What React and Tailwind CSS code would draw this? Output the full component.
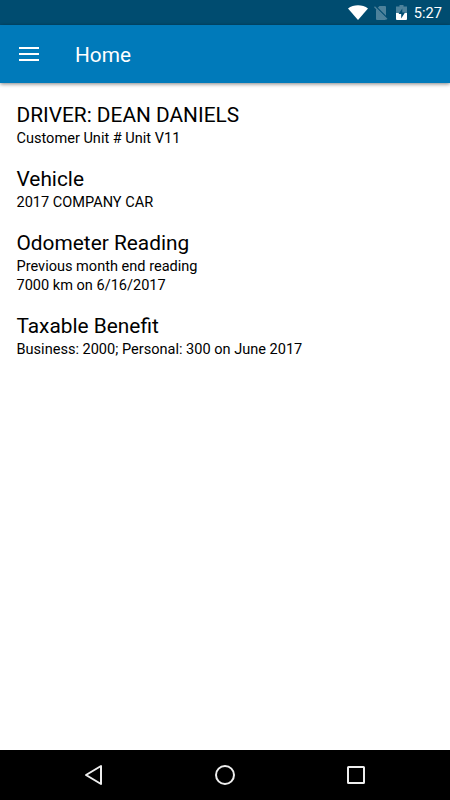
const sections = [
  { title: "DRIVER: DEAN DANIELS", lines: ["Customer Unit # Unit V11"] },
  { title: "Vehicle", lines: ["2017 COMPANY CAR"] },
  { title: "Odometer Reading", lines: ["Previous month end reading", "7000 km on 6/16/2017"] },
  { title: "Taxable Benefit", lines: ["Business: 2000; Personal: 300 on June 2017"] },
];

const StatusBar = () => (
  <div className="flex h-[25px] items-center justify-end bg-[#004c70] pr-2 text-white">
    <svg width="20" height="15" viewBox="0 0 20 15" className="mr-[6px]">
      <path d="M0 3.500C5.500-.9 14.500-.9 20 3.500L10 15Z" fill="currentColor" />
    </svg>
    {/* no SIM */}
    <svg width="14" height="15" viewBox="0 0 14 15" className="mr-2 text-[#4d829b]">
      <path d="M5.500 1H11q1 0 1 1v12q0 1-1 1H3q-1 0-1-1V4.500Z" fill="currentColor" />
      <path d="M1.500 1.200L14 13.700" stroke="#004c70" strokeWidth="1.500" />
      <path d="M.5 1.800L13 14.300" stroke="currentColor" strokeWidth="1.300" />
    </svg>
    {/* half charged battery */}
    <svg width="11" height="15" viewBox="0 0 11 15" className="mr-[7px]">
      <path d="M3.500 0h4v1.500H11V8H0V1.500h3.500Z" fill="#4d829b" />
      <path d="M0 8h11v6q0 1-1 1H1q-1 0-1-1Z" fill="currentColor" />
      <path d="M6.300 3.500L2.500 9h2.700v4.500L9 7.500H6.300Z" fill="#004c70" />
    </svg>
    <span className="pt-0.5 text-[14.6px] leading-none">5:27</span>
  </div>
);

const AppBar = () => (
  <header className="flex h-[58px] items-center bg-[#007aba] pl-[19px] text-white shadow-[0_1px_4px_rgba(0,0,0,0.5)]">
    <button type="button" aria-label="Menu">
      <svg width="20" height="14" viewBox="0 0 20 14" fill="currentColor">
        <path d="M0 0h20v2H0ZM0 6h20v2H0ZM0 12h20v2H0Z" />
      </svg>
    </button>
    <h1 className="ml-9 pt-0.5 text-[20.8px] leading-none">Home</h1>
  </header>
);

const NavBar = () => (
  <nav className="flex h-[50px] items-center justify-center gap-[109px] bg-black text-[#eee]">
    <svg width="22" height="22" viewBox="0 0 22 22" fill="none" stroke="currentColor" strokeWidth="2">
      <path d="M18 2v18L3 11Z" strokeLinejoin="round" />
    </svg>
    <svg width="22" height="22" viewBox="0 0 22 22" fill="none" stroke="currentColor" strokeWidth="2">
      <circle cx="11" cy="11" r="9" />
    </svg>
    <svg width="22" height="22" viewBox="0 0 22 22" fill="none" stroke="currentColor" strokeWidth="2">
      <rect x="3" y="3" width="16" height="16" rx="0.500" />
    </svg>
  </nav>
);

const App = () => {
  return (
    <div className="flex h-screen flex-col bg-white font-['Roboto',sans-serif] text-black">
      <StatusBar />
      <AppBar />
      <main className="flex flex-1 flex-col gap-[17px] px-[16.5px] pt-[18px]">
        {sections.map((section) => (
          <section key={section.title}>
            <h2 className="text-[20.85px] leading-7">{section.title}</h2>
            {section.lines.map((line) => (
              <p key={line} className="text-[14.55px] leading-[19px]">
                {line}
              </p>
            ))}
          </section>
        ))}
      </main>
      <NavBar />
    </div>
  );
};

export default App;
